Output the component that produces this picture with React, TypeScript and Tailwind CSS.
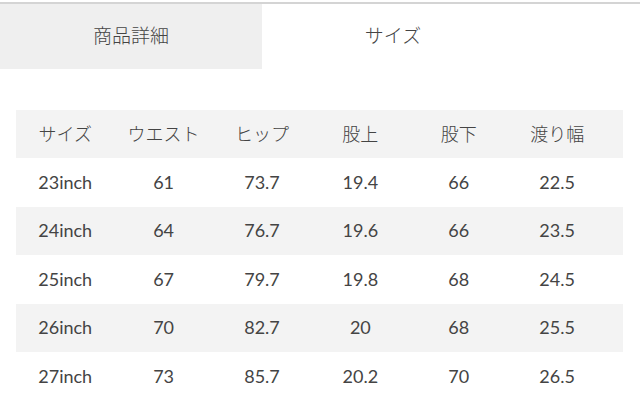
export default function App() {
  const header = ["サイズ", "ウエスト", "ヒップ", "股上", "股下", "渡り幅"];
  const rows = [
    ["23inch", "61", "73.7", "19.4", "66", "22.5"],
    ["24inch", "64", "76.7", "19.6", "66", "23.5"],
    ["25inch", "67", "79.7", "19.8", "68", "24.5"],
    ["26inch", "70", "82.7", "20", "68", "25.5"],
    ["27inch", "73", "85.7", "20.2", "70", "26.5"],
  ];
  const font = { fontFamily: "Lato, 'Noto Sans CJK JP', sans-serif" };
  return (
    <div className="w-[640px] h-[414px] bg-white overflow-hidden text-[#444]" style={font}>
      <div className="h-[2px] bg-white" />
      <div className="h-[2px] bg-[#d4d4d4]" />
      <div className="flex h-[65px]">
        <div className="w-[262px] bg-[#efefef] flex items-center justify-center text-[19px] font-light pb-[1px]">商品詳細</div>
        <div className="w-[262px] bg-white flex items-center justify-center text-[19px] font-light pb-[1px]">サイズ</div>
      </div>
      <div className="mt-[41px] ml-[16px] w-[607px]">
        <div className="grid grid-cols-[repeat(6,98.4px)] h-[48px] items-center bg-[#f3f3f3] text-[18px] font-light">
          {header.map((h) => (
            <div key={h} className="text-center">{h}</div>
          ))}
        </div>
        {rows.map((r, i) => (
          <div
            key={i}
            className={`grid grid-cols-[repeat(6,98.4px)] h-[48.5px] items-center text-[18px] ${i % 2 === 1 ? "bg-[#f3f3f3]" : "bg-white"}`}
          >
            {r.map((c, j) => (
              <div key={j} className="text-center">{c}</div>
            ))}
          </div>
        ))}
      </div>
    </div>
  );
}
